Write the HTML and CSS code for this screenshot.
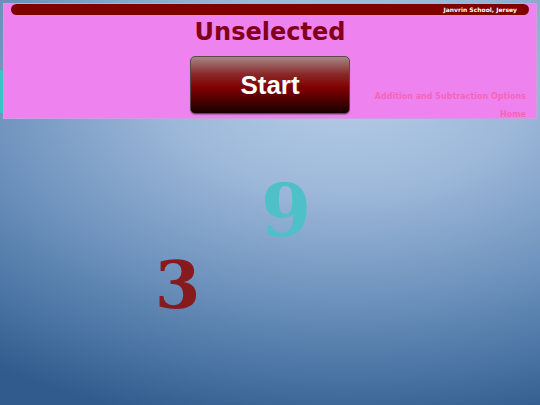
FILE: index.html
```html
<!DOCTYPE html>
<html>
<head>
<meta charset="utf-8">
<link rel="stylesheet" href="styles.css">
</head>
<body>
<div class="edge-tab"></div>
<header class="panel">
  <div class="school-bar"><span class="school-name">Janvrin School, Jersey</span></div>
  <h1 class="status">Unselected</h1>
  <div class="controls">
    <div class="spacer"></div>
    <button class="start-btn">Start</button>
    <nav class="links">
      <a class="link" href="#">Addition and Subtraction Options</a>
      <a class="link home" href="#">Home</a>
    </nav>
  </div>
</header>
<div class="digit digit-nine">9</div>
<div class="digit digit-three">3</div>
</body>
</html>
```

FILE: styles.css
```css
html, body {
  margin: 0;
  padding: 0;
  width: 540px;
  height: 405px;
  overflow: hidden;
}
body {
  position: relative;
  font-family: "DejaVu Sans", Verdana, sans-serif;
  background: radial-gradient(ellipse 110% 85% at 64% 22%, #b6cde9 0%, #9db8d9 30%, #7296c0 58%, #4c76a5 82%, #305b8c 100%);
}
.edge-tab {
  position: absolute;
  left: 0;
  top: 70px;
  width: 3px;
  height: 43px;
  background: #35c4c8;
}
.panel {
  position: relative;
  margin: 3px 3px 0 3px;
  height: 114px;
  background: #ee82ee;
  border: 1px solid #c9a2dd;
  box-sizing: content-box;
  overflow: hidden;
}
.school-bar {
  margin: 0 7px;
  height: 11px;
  background: #800000;
  border-radius: 6px;
  display: flex;
  justify-content: flex-end;
  align-items: center;
  padding-right: 12px;
}
.school-name {
  color: #fff;
  font-weight: bold;
  font-size: 6px;
  line-height: 11px;
}
.status {
  margin: 3px 0 0 0;
  text-align: center;
  font-size: 24px;
  line-height: 28px;
  font-weight: bold;
  color: #82001a;
}
.controls {
  display: grid;
  grid-template-columns: 1fr 160px 1fr;
  margin-top: 10px;
}
.start-btn {
  width: 160px;
  height: 58px;
  border: 1px solid #5a4a4a;
  border-radius: 5px;
  background: linear-gradient(to bottom, #a88686 0%, #8a2a2a 30%, #800000 55%, #3a0000 85%, #150000 100%);
  color: #fff;
  font-family: "Liberation Sans", Arial, sans-serif;
  font-weight: bold;
  font-size: 26px;
  padding: 0;
  box-shadow: 0 1px 1px rgba(0,0,0,0.25);
}
.links {
  display: flex;
  flex-direction: column;
  align-items: flex-end;
  padding: 36px 10px 0 0;
  gap: 8px;
}
.link {
  color: #f566b6;
  font-weight: bold;
  font-size: 8px;
  line-height: 10px;
  text-decoration: none;
}
.digit {
  position: absolute;
  font-family: "DejaVu Serif", serif;
  font-weight: bold;
  line-height: 1;
}
.digit-three {
  left: 155px;
  top: 253px;
  font-size: 65px;
  color: #861a1c;
}
.digit-nine {
  left: 261px;
  top: 175px;
  font-size: 72px;
  color: #50c0c8;
}
```
